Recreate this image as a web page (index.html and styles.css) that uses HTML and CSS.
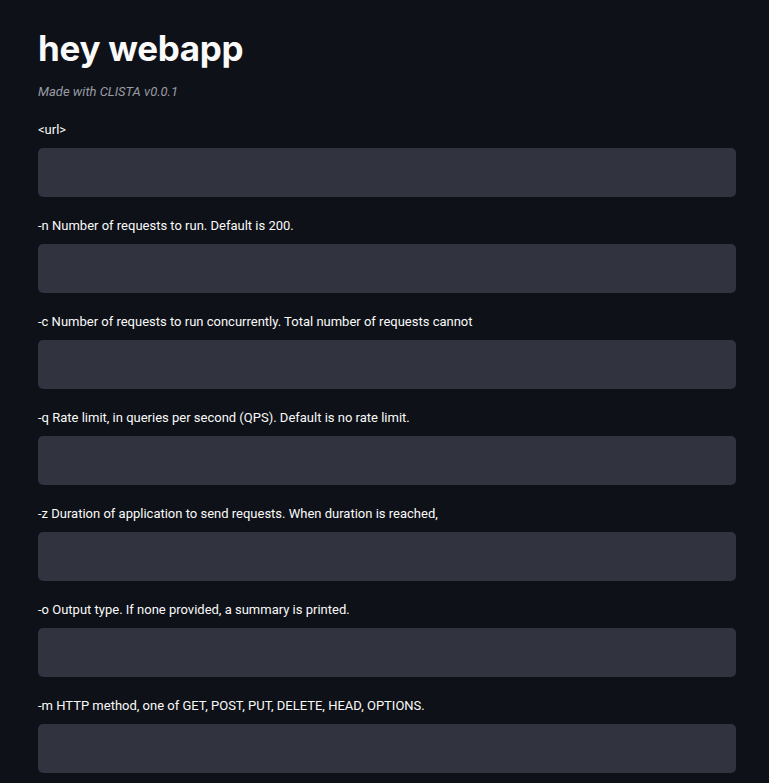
FILE: index.html
```html
<!DOCTYPE html>
<html>
<head>
<meta charset="utf-8">
<link rel="stylesheet" href="styles.css">
</head>
<body>
<main class="app">
  <h1 class="title">hey webapp</h1>
  <p class="caption">Made with CLISTA v0.0.1</p>
  <div class="field"><label class="label">&lt;url&gt;</label><div class="input"></div></div>
  <div class="field"><label class="label">-n Number of requests to run. Default is 200.</label><div class="input"></div></div>
  <div class="field"><label class="label">-c Number of requests to run concurrently. Total number of requests cannot</label><div class="input"></div></div>
  <div class="field"><label class="label">-q Rate limit, in queries per second (QPS). Default is no rate limit.</label><div class="input"></div></div>
  <div class="field"><label class="label">-z Duration of application to send requests. When duration is reached,</label><div class="input"></div></div>
  <div class="field"><label class="label">-o Output type. If none provided, a summary is printed.</label><div class="input"></div></div>
  <div class="field"><label class="label">-m HTTP method, one of GET, POST, PUT, DELETE, HEAD, OPTIONS.</label><div class="input"></div></div>
</main>
</body>
</html>
```

FILE: styles.css
```css
html, body {
  margin: 0;
  padding: 0;
  background: #0e1117;
  color: #fafafa;
  font-family: Roboto, "Noto Sans", sans-serif;
}
.app {
  padding: 26px 33px 0 38px;
  display: flex;
  flex-direction: column;
}
.title {
  margin: 0;
  font-family: Inter, sans-serif;
  font-size: 35px;
  font-weight: 700;
  line-height: 44px;
  letter-spacing: -0.3px;
}
.caption {
  margin: 13px 0 0 0;
  font-size: 13px;
  line-height: 18px;
  font-style: italic;
  color: #9a9ca6;
}
.field {
  display: flex;
  flex-direction: column;
  margin-top: 20px;
}
.field + .field {
  margin-top: 20px;
}
.label {
  font-size: 13px;
  line-height: 18px;
  margin-bottom: 9px;
}
.input {
  height: 49px;
  border-radius: 5px;
  background: #31333e;
}
```
